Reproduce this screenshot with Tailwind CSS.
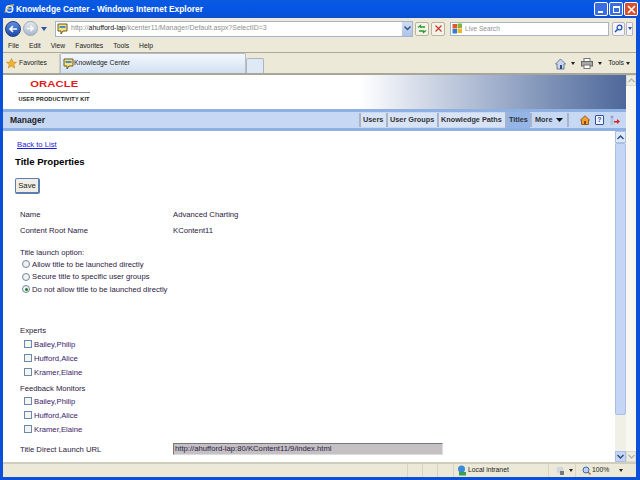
<!DOCTYPE html>
<html>
<head>
<meta charset="utf-8">
<script src="https://cdn.jsdelivr.net/npm/@tailwindcss/browser@4"></script>
</head>
<body class="overflow-hidden">
<div class="w-[640px] h-[480px] flex flex-col bg-[#0a50d8] font-['Liberation_Sans',sans-serif] text-[7.7px] text-[#222] overflow-hidden">
  <!-- title bar -->
  <div class="h-[18px] shrink-0 flex items-center pl-[4px] pr-[2px] bg-gradient-to-b from-[#0a5ae0] via-[#0555e5] to-[#0a4fd0]">
    <svg width="11" height="12" viewBox="0 0 12 12"><ellipse cx="6" cy="6" rx="3.6" ry="3.6" fill="none" stroke="#e8f2ff" stroke-width="1.6"/><path d="M1 10 C2 5 7 1 11 1.5" fill="none" stroke="#f5c842" stroke-width="1.3"/><rect x="3" y="5.5" width="6" height="1" fill="#e8f2ff"/></svg>
    <span class="ml-[1px] text-[8.4px] font-bold text-white">Knowledge Center - Windows Internet Explorer</span>
    <div class="ml-auto flex gap-[1px]">
      <div class="w-[14px] h-[14px] rounded-[2px] border border-white bg-[#3a6ee0] flex items-end pl-[3px] pb-[2px]"><div class="w-[5px] h-[2px] bg-white"></div></div>
      <div class="w-[14px] h-[14px] rounded-[2px] border border-white bg-[#3a6ee0] flex items-center justify-center"><div class="w-[7px] h-[7px] border border-white border-t-2"></div></div>
      <div class="w-[14px] h-[14px] rounded-[2px] border border-white bg-[#d8502c] flex items-center justify-center">
        <svg width="9" height="9" viewBox="0 0 9 9"><path d="M1 1 L8 8 M8 1 L1 8" stroke="#fff" stroke-width="1.6"/></svg>
      </div>
    </div>
  </div>
  <!-- window inner -->
  <div class="flex-1 min-h-0 ml-[3px] mr-[4px] mb-[3px] flex flex-col bg-[#ece9d8]">
    <!-- address row -->
    <div class="h-[20px] shrink-0 flex items-center bg-[#ece9d8] pl-[2px] pt-[1px]">
      <div class="w-[46px] h-[17px] flex items-center">
        <div class="w-[16px] h-[16px] rounded-full bg-gradient-to-b from-[#5e8de0] to-[#1c48a8] border border-[#20407f] flex items-center justify-center">
          <svg width="10" height="10" viewBox="0 0 10 10"><path d="M9 5 H2 M5 2 L2 5 L5 8" fill="none" stroke="#fff" stroke-width="1.7"/></svg>
        </div>
        <div class="w-[15px] h-[15px] ml-[2px] rounded-full bg-gradient-to-b from-[#e4e8ee] to-[#aab8cc] border border-[#9aa8bc] flex items-center justify-center">
          <svg width="9" height="9" viewBox="0 0 10 10"><path d="M1 5 H8 M5 2 L8 5 L5 8" fill="none" stroke="#fff" stroke-width="1.5"/></svg>
        </div>
        <svg class="ml-[3px]" width="6" height="4" viewBox="0 0 6 4"><path d="M0 0 H6 L3 4 Z" fill="#2a55a8"/></svg>
      </div>
      <div class="ml-[4px] w-[358px] h-[16px] bg-white border border-[#a5b4c8] flex items-center pl-[1px] text-[7px] text-[#8f8f8f]">
        <svg class="mr-[3px] shrink-0" width="11" height="12" viewBox="0 0 11 12"><path d="M1 1 H10 V8 H6 L4 11 V8 H1 Z" fill="#f6e27a" stroke="#6a5a20" stroke-width="1"/><rect x="2.5" y="3" width="6" height="2" fill="#4a8ad0"/></svg>
        <span>http://<span class="text-[#111]">ahufford-lap</span>/kcenter11/Manager/Default.aspx?SelectID=3</span>
        <div class="ml-auto w-[10px] h-[14px] bg-gradient-to-b from-[#cfdcf2] to-[#aec3e6] flex items-center justify-center">
          <svg width="7" height="5" viewBox="0 0 7 5"><path d="M0.5 0.5 L3.5 3.5 L6.5 0.5" fill="none" stroke="#32508c" stroke-width="1.4"/></svg>
        </div>
      </div>
      <div class="ml-[2px] w-[14px] h-[14px] rounded-[2px] border border-[#b8b4a0] bg-[#f5f3e8] flex items-center justify-center">
        <svg width="10" height="10" viewBox="0 0 10 10"><path d="M1 3.5 L3.5 1.5 V3 H8 M9 6.5 L6.5 8.5 V7 H2" fill="none" stroke="#2a9a32" stroke-width="1.3"/></svg>
      </div>
      <div class="ml-[2px] w-[14px] h-[14px] rounded-[2px] border border-[#b8b4a0] bg-[#f5f3e8] flex items-center justify-center">
        <svg width="9" height="9" viewBox="0 0 9 9"><path d="M1.5 1.5 L7.5 7.5 M7.5 1.5 L1.5 7.5" stroke="#c83a30" stroke-width="1.2"/></svg>
      </div>
      <div class="ml-[5px] w-[159px] h-[14px] bg-white border border-[#a5b4c8] flex items-center pl-[1px] text-[#909090] text-[6.6px]">
        <svg class="mr-[2px]" width="11" height="11" viewBox="0 0 11 11"><rect x="0.5" y="1" width="4.5" height="4.5" fill="#e2572a"/><rect x="5.5" y="0.5" width="4.5" height="4.5" fill="#7fb53a"/><rect x="0.5" y="6" width="4.5" height="4.5" fill="#2f7fd0"/><rect x="5.5" y="5.5" width="4.5" height="4.5" fill="#f0b429"/></svg>
        Live Search
      </div>
      <div class="ml-[3px] w-[13px] h-[14px] rounded-[2px] border border-[#b8b4c0] bg-[#f3f5fb] flex items-center justify-center">
        <svg width="9" height="9" viewBox="0 0 9 9"><circle cx="5.5" cy="3.5" r="2.4" fill="none" stroke="#1f4fb0" stroke-width="1.2"/><path d="M3.7 5.3 L1 8" stroke="#1f4fb0" stroke-width="1.5"/></svg>
      </div>
      <div class="ml-[1px] w-[7px] h-[14px] rounded-[1px] border border-[#b8b4c0] bg-[#f3f5fb] flex items-center justify-center">
        <svg width="4" height="3" viewBox="0 0 4 3"><path d="M0 0 H4 L2 3 Z" fill="#2a55a8"/></svg>
      </div>
    </div>
    <!-- menu row -->
    <div class="h-[15px] shrink-0 flex items-center pt-[2px] border-b border-[#aca899] bg-[#ece9d8] text-[6.8px] text-[#222] pl-[5px] gap-[10px]">
      <span>File</span><span>Edit</span><span>View</span><span>Favorites</span><span>Tools</span><span>Help</span>
    </div>
    <!-- tab row -->
    <div class="h-[22px] shrink-0 flex items-end bg-[#ece9d8] border-b-2 border-[#a8a698] text-[6.8px]">
      <div class="w-[57px] h-[19px] flex items-center pl-[3px] gap-[2px] border-r border-[#d0ccb8] self-start mt-[1px]">
        <svg width="11" height="11" viewBox="0 0 11 11"><path d="M5.5 0.5 L7 4 L10.5 4.3 L7.8 6.5 L8.7 10 L5.5 8 L2.3 10 L3.2 6.5 L0.5 4.3 L4 4 Z" fill="#f2b233" stroke="#c8851c" stroke-width="0.6"/></svg>
        <span>Favorites</span>
      </div>
      <div class="w-[186px] h-[20px] flex items-center pl-[2px] rounded-t-[2px] border border-b-0 border-[#b4bcc8] bg-gradient-to-b from-[#f4f8fd] to-[#d2e0f2]">
        <svg class="shrink-0" width="11" height="12" viewBox="0 0 11 12"><path d="M1 1 H10 V8 H6 L4 11 V8 H1 Z" fill="#f6e27a" stroke="#6a5a20" stroke-width="1"/><rect x="2.5" y="3" width="6" height="2" fill="#4a8ad0"/></svg>
        <span>Knowledge Center</span>
      </div>
      <div class="w-[18px] h-[15px] bg-[#dfe8f5] border border-b-0 border-[#b0b4bc] rounded-t-[2px]"></div>
      <div class="ml-auto h-[19px] flex items-center self-start mt-[1px] pr-[6px]">
        <svg width="11" height="12" viewBox="0 0 11 12"><path d="M0.5 6 L5.5 1 L10.5 6 H9 V11 H2 V6 Z" fill="#c8d6ea" stroke="#50628a" stroke-width="0.8"/><rect x="5" y="7" width="2" height="4" fill="#2f4a80"/></svg>
        <svg class="ml-[5px]" width="4" height="3" viewBox="0 0 4 3"><path d="M0 0 H4 L2 3 Z" fill="#222"/></svg>
        <svg class="ml-[6px]" width="12" height="11" viewBox="0 0 12 11"><rect x="3" y="0.5" width="6" height="3" fill="#fff" stroke="#777"/><rect x="0.5" y="3.5" width="11" height="4.5" fill="#a8a8a8" stroke="#666"/><rect x="3" y="7" width="6" height="3.5" fill="#fff" stroke="#777"/></svg>
        <svg class="ml-[5px]" width="4" height="3" viewBox="0 0 4 3"><path d="M0 0 H4 L2 3 Z" fill="#222"/></svg>
        <span class="ml-[6px]">Tools</span>
        <svg class="ml-[2px]" width="4" height="3" viewBox="0 0 4 3"><path d="M0 0 H4 L2 3 Z" fill="#222"/></svg>
      </div>
    </div>
    <!-- browser viewport -->
    <div class="flex-1 min-h-0 flex bg-white">
      <div class="flex-1 min-w-0 flex flex-col">
        <!-- header -->
        <div class="h-[34px] shrink-0 flex bg-white">
          <div class="w-[357px] pl-[15px] pt-[5px] shrink-0">
            <div class="w-[72px] flex flex-col items-center">
              <div class="h-[9px] text-[#e01b22] text-[9px] font-bold leading-[9px] tracking-[0.1px] scale-x-[1.25] origin-center">ORACLE</div>
              <div class="w-[72px] h-px bg-[#888] mt-[3px]"></div>
              <div class="mt-[3px] text-[5.5px] leading-[6px] font-bold text-[#222] whitespace-nowrap tracking-[0.15px]">USER PRODUCTIVITY KIT</div>
            </div>
          </div>
          <div class="flex-1 bg-gradient-to-r from-white to-[#4e689a]"></div>
        </div>
        <!-- nav -->
        <div class="h-[22px] shrink-0 flex flex-col bg-[#c6d8f4] border-t-[3px] border-b-[3px] border-[#8fb0e2]">
          <div class="flex-1 flex items-center pl-[7px] pr-[6px] text-[7.3px] font-bold text-[#333]">
            <span class="text-[#222] text-[8.5px]">Manager</span>
            <div class="ml-auto flex items-center h-full">
              <div class="w-[27px] h-[14px] flex items-center border-l-2 border-[#a8b4c8] pl-[2px] bg-[#d8e4f6]">Users</div>
              <div class="w-[51px] h-[14px] flex items-center border-l-2 border-[#a8b4c8] pl-[2px] bg-[#d8e4f6]">User Groups</div>
              <div class="w-[68px] h-[14px] flex items-center border-l-2 border-[#a8b4c8] pl-[2px] bg-[#d8e4f6]">Knowledge Paths</div>
              <div class="w-[25px] h-full flex items-center border-l-2 border-[#a8b4c8] pl-[2px] bg-[#94b5e6]">Titles</div>
              <div class="w-[39px] h-[14px] flex items-center border-l-2 border-r-2 border-[#a8b4c8] pl-[3px]">More
                <svg class="ml-[4px]" width="7" height="4" viewBox="0 0 7 4"><path d="M0 0 H7 L3.5 4 Z" fill="#111"/></svg>
              </div>
              <svg class="ml-[11px]" width="10" height="10" viewBox="0 0 10 10"><path d="M0.5 5 L5 0.8 L9.5 5 H8.5 V9.5 H1.5 V5 Z" fill="#f0a030" stroke="#8a4a10" stroke-width="0.8"/><rect x="4" y="6" width="2" height="3.5" fill="#8a4a10"/></svg>
              <div class="ml-[5px] w-[9px] h-[10px] rounded-[1px] bg-[#eef3fb] border border-[#30509a] text-[#30509a] text-[7px] leading-[8px] text-center">?</div>
              <svg class="ml-[5px]" width="11" height="11" viewBox="0 0 11 11"><circle cx="3" cy="2" r="1.6" fill="#8ea4c8"/><rect x="1.5" y="4" width="3" height="6" fill="#b4c4dc"/><path d="M5 6 H8 V4 L11 6.5 L8 9 V7.5 H5 Z" fill="#e02020"/></svg>
            </div>
          </div>
        </div>
        <!-- form -->
        <div class="flex-1 min-h-0 flex">
          <div class="flex-1 min-w-0 relative text-[#2b2040] leading-[11px]">
            <div class="pl-[12px]">
              <a class="block mt-[8px] ml-[2px] text-[#1a1ae0] underline">Back to List</a>
              <div class="mt-[6px] text-[9.6px] font-bold text-black leading-[12px]">Title Properties</div>
              <button class="mt-[10px] block w-[25px] h-[16px] rounded-[2px] border border-[#5a7eb4] border-r-2 border-b-2 bg-[#f0eee4] text-[7.7px] text-[#222] leading-none">Save</button>
            </div>
            <div class="pl-[17px]">
              <div class="mt-[15px] flex h-[11px]"><span class="w-[153px]">Name</span><span>Advanced Charting</span></div>
              <div class="mt-[5px] flex h-[11px]"><span class="w-[153px]">Content Root Name</span><span>KContent11</span></div>
              <div class="mt-[11px] h-[11px]">Title launch option:</div>
              <div class="h-[12px] flex items-center"><span class="ml-[2px] mr-[2px] w-[8px] h-[8px] rounded-full border border-[#6a8aa8] bg-[#f2f1ea]"></span>Allow title to be launched directly</div>
              <div class="h-[13px] flex items-center"><span class="ml-[2px] mr-[2px] w-[8px] h-[8px] rounded-full border border-[#6a8aa8] bg-[#f2f1ea]"></span>Secure title to specific user groups</div>
              <div class="h-[12px] flex items-center"><span class="ml-[2px] mr-[2px] w-[8px] h-[8px] rounded-full border border-[#6a8aa8] bg-[#f2f1ea] flex items-center justify-center"><span class="w-[3px] h-[3px] rounded-full bg-[#1f7a2f]"></span></span>Do not allow title to be launched directly</div>
              <div class="mt-[30px] h-[11px]">Experts</div>
              <div class="mt-[1px] h-[14px] flex items-center"><span class="ml-[4px] mr-[2px] w-[8px] h-[8px] border border-[#6a88a8] bg-[#f5f4ee]"></span><span class="text-[#3a1a6a]">Bailey,Philip</span></div>
              <div class="h-[14px] flex items-center"><span class="ml-[4px] mr-[2px] w-[8px] h-[8px] border border-[#6a88a8] bg-[#f5f4ee]"></span><span class="text-[#3a1a6a]">Hufford,Alice</span></div>
              <div class="h-[14px] flex items-center"><span class="ml-[4px] mr-[2px] w-[8px] h-[8px] border border-[#6a88a8] bg-[#f5f4ee]"></span><span class="text-[#3a1a6a]">Kramer,Elaine</span></div>
              <div class="mt-[4px] h-[11px]">Feedback Monitors</div>
              <div class="h-[14px] flex items-center"><span class="ml-[4px] mr-[2px] w-[8px] h-[8px] border border-[#6a88a8] bg-[#f5f4ee]"></span><span class="text-[#3a1a6a]">Bailey,Philip</span></div>
              <div class="h-[14px] flex items-center"><span class="ml-[4px] mr-[2px] w-[8px] h-[8px] border border-[#6a88a8] bg-[#f5f4ee]"></span><span class="text-[#3a1a6a]">Hufford,Alice</span></div>
              <div class="h-[14px] flex items-center"><span class="ml-[4px] mr-[2px] w-[8px] h-[8px] border border-[#6a88a8] bg-[#f5f4ee]"></span><span class="text-[#3a1a6a]">Kramer,Elaine</span></div>
              <div class="mt-[7px] flex items-center h-[12px]"><span class="w-[153px]">Title Direct Launch URL</span><span class="w-[270px] h-[12px] pl-[1px] bg-[#c4c0c4] border border-t-[#777] border-l-[#777] border-r-[#ddd] border-b-[#ddd] leading-[10px]">http://ahufford-lap:80/KContent11/9/index.html</span></div>
            </div>
          </div>
          <!-- inner scrollbar -->
          <div class="w-[11px] shrink-0 flex flex-col bg-[#f1f0e6]">
            <div class="h-[12px] bg-[#dfe8f8] border border-[#a8c0e4] flex items-center justify-center"><svg width="7" height="5" viewBox="0 0 7 5"><path d="M0.5 4 L3.5 1 L6.5 4" fill="none" stroke="#2a4a80" stroke-width="1.4"/></svg></div>
            <div class="h-[272px] bg-[#c4d5f6] border border-[#a8c0e4] rounded-[2px]"></div>
            <div class="flex-1"></div>
            <div class="h-[11px] bg-[#c4d5f6] border border-[#a8c0e4] flex items-center justify-center"><svg width="7" height="5" viewBox="0 0 7 5"><path d="M0.5 1 L3.5 4 L6.5 1" fill="none" stroke="#2a4a80" stroke-width="1.4"/></svg></div>
          </div>
        </div>
      </div>
      <!-- outer scrollbar -->
      <div class="w-[10px] shrink-0 flex flex-col bg-[#f8f7f2]">
        <div class="h-[11px] bg-[#eeede5] border border-[#dcdacb] flex items-center justify-center"><svg width="7" height="5" viewBox="0 0 7 5"><path d="M0.5 4 L3.5 1 L6.5 4" fill="none" stroke="#b4b2a6" stroke-width="1.3"/></svg></div>
        <div class="flex-1"></div>
        <div class="h-[11px] bg-[#eeede5] border border-[#dcdacb] flex items-center justify-center"><svg width="7" height="5" viewBox="0 0 7 5"><path d="M0.5 1 L3.5 4 L6.5 1" fill="none" stroke="#b4b2a6" stroke-width="1.3"/></svg></div>
      </div>
    </div>
    <!-- status bar -->
    <div class="h-[15px] shrink-0 flex items-center bg-[#ece9d8] border-t-2 border-[#d0cdbc] text-[6.8px] text-[#222]">
      <div class="w-[404px] h-full"></div>
      <div class="w-[15px] h-full border-l border-[#d8d4c0]"></div>
      <div class="w-[15px] h-full border-l border-[#d8d4c0]"></div>
      <div class="w-[16px] h-full border-l border-[#d8d4c0]"></div>
      <div class="w-[95px] h-full border-l border-[#d8d4c0] flex items-center pl-[2px]">
        <svg class="mr-[1px] shrink-0" width="11" height="11" viewBox="0 0 11 11"><circle cx="5.5" cy="4" r="3.5" fill="#3a8ad8"/><rect x="3" y="7" width="7" height="3.5" fill="#3aa050"/></svg>
        Local intranet
      </div>
      <div class="w-[27px] h-full border-l border-[#d8d4c0] flex items-center pl-[6px]">
        <svg width="11" height="10" viewBox="0 0 11 10"><circle cx="5" cy="4" r="3.5" fill="#cfd6de"/><rect x="5" y="5" width="4" height="4" fill="#777"/></svg>
        <svg class="ml-[3px]" width="4" height="3" viewBox="0 0 4 3"><path d="M0 0 H4 L2 3 Z" fill="#222"/></svg>
      </div>
      <div class="flex-1 h-full border-l border-[#d8d4c0] flex items-center pl-[6px]">
        <svg class="mr-[1px]" width="9" height="9" viewBox="0 0 9 9"><circle cx="4" cy="4" r="3" fill="#bcd4f2" stroke="#3a6ab0"/><path d="M6 6 L8.5 8.5" stroke="#a06a20" stroke-width="1.3"/></svg>
        100%
        <svg class="ml-[10px]" width="4" height="3" viewBox="0 0 4 3"><path d="M0 0 H4 L2 3 Z" fill="#222"/></svg>
      </div>
    </div>
  </div>
</div>
</body>
</html>
